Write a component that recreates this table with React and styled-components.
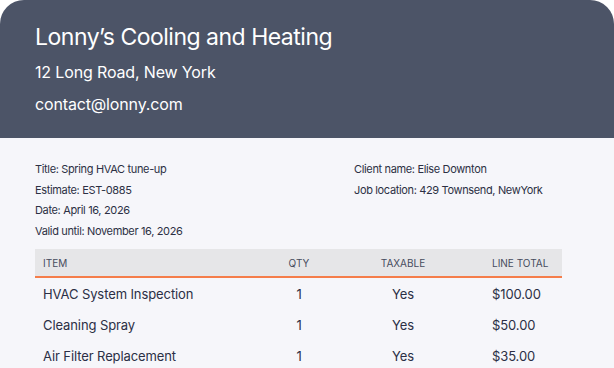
import React from 'react';
import styled, { createGlobalStyle } from 'styled-components';

const GlobalStyle = createGlobalStyle`
  html, body {
    margin: 0;
    padding: 0;
    background: #ffffff;
    font-family: Inter, "Liberation Sans", sans-serif;
  }
`;

const Card = styled.div`
  width: 614px;
  height: 368px;
  overflow: hidden;
  border-radius: 24px 24px 0 0;
  background: #f6f6fa;
`;

const Header = styled.header`
  height: 138px;
  box-sizing: border-box;
  padding: 21px 35px 0;
  background: #4c5467;
  color: #ffffff;
`;

const CompanyName = styled.h1`
  margin: 0;
  font-size: 23px;
  font-weight: 400;
  line-height: 32px;
  letter-spacing: -0.5px;
`;

const HeaderLine = styled.div`
  font-size: 16px;
  line-height: 32px;
  letter-spacing: -0.15px;
  margin-top: ${({ $first }) => ($first ? '3px' : '0')};
`;

const Body = styled.section`
  padding: 21px 52px 0 35px;
`;

const Info = styled.div`
  display: grid;
  grid-template-columns: 319px 1fr;
  margin-bottom: 8px;
`;

const InfoColumn = styled.div`
  display: flex;
  flex-direction: column;
`;

const InfoLine = styled.div`
  font-size: 11px;
  line-height: 20.5px;
  letter-spacing: -0.35px;
  color: #2c3044;
`;

const Table = styled.div`
  display: flex;
  flex-direction: column;
`;

const Row = styled.div`
  display: grid;
  grid-template-columns: 230px 68px 140px 1fr;
  align-items: center;
  box-sizing: border-box;
  height: ${({ $head }) => ($head ? '29px' : '31px')};
  background: ${({ $head }) => ($head ? '#e6e6e8' : 'transparent')};
  border-bottom: ${({ $head }) => ($head ? '2px solid #f57d4a' : 'none')};
`;

const Cell = styled.div`
  text-align: ${({ $align }) => $align || 'left'};
  padding-left: ${({ $pad }) => $pad || 0}px;
  font-size: ${({ $head }) => ($head ? '10px' : '13px')};
  text-transform: ${({ $head }) => ($head ? 'uppercase' : 'none')};
  color: ${({ $head }) => ($head ? '#474c5e' : '#2b2f45')};
  letter-spacing: ${({ $head }) => ($head ? '0' : '-0.1px')};
`;

const items = [
  { name: 'HVAC System Inspection', qty: 1, taxable: 'Yes', total: '$100.00' },
  { name: 'Cleaning Spray', qty: 1, taxable: 'Yes', total: '$50.00' },
  { name: 'Air Filter Replacement', qty: 1, taxable: 'Yes', total: '$35.00' },
];

const App = () => (
  <>
    <GlobalStyle />
    <Card>
      <Header>
        <CompanyName>Lonny’s Cooling and Heating</CompanyName>
        <HeaderLine $first>12 Long Road, New York</HeaderLine>
        <HeaderLine>contact@lonny.com</HeaderLine>
      </Header>
      <Body>
        <Info>
          <InfoColumn>
            <InfoLine>Title: Spring HVAC tune-up</InfoLine>
            <InfoLine>Estimate: EST-0885</InfoLine>
            <InfoLine>Date: April 16, 2026</InfoLine>
            <InfoLine>Valid until: November 16, 2026</InfoLine>
          </InfoColumn>
          <InfoColumn>
            <InfoLine>Client name: Elise Downton</InfoLine>
            <InfoLine>Job location: 429 Townsend, NewYork</InfoLine>
          </InfoColumn>
        </Info>
        <Table>
          <Row $head>
            <Cell $head $pad={8}>Item</Cell>
            <Cell $head $align="center">Qty</Cell>
            <Cell $head $align="center">Taxable</Cell>
            <Cell $head $pad={19}>Line total</Cell>
          </Row>
          {items.map((item) => (
            <Row key={item.name}>
              <Cell $pad={8}>{item.name}</Cell>
              <Cell $align="center">{item.qty}</Cell>
              <Cell $align="center">{item.taxable}</Cell>
              <Cell $pad={19}>{item.total}</Cell>
            </Row>
          ))}
        </Table>
      </Body>
    </Card>
  </>
);

export default App;
